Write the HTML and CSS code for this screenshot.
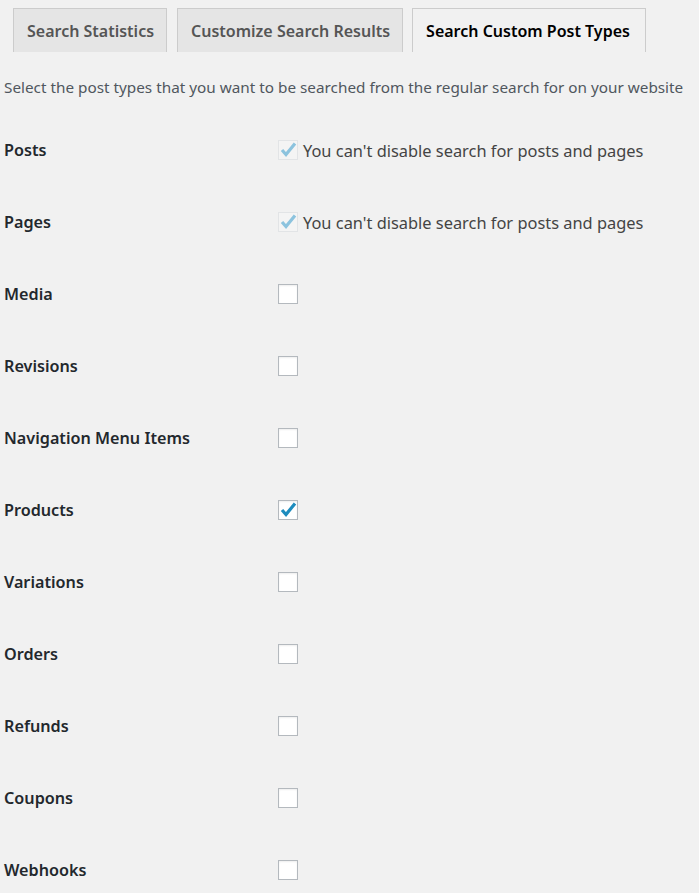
FILE: index.html
```
<!DOCTYPE html>
<html lang="en">
<head>
<meta charset="utf-8">
<title>Search Custom Post Types</title>
<link rel="stylesheet" href="styles.css">
</head>
<body>
<nav class="tabs">
  <a class="tab">Search Statistics</a>
  <a class="tab">Customize Search Results</a>
  <a class="tab active">Search Custom Post Types</a>
</nav>
<p class="desc">Select the post types that you want to be searched from the regular search for on your website</p>
<div class="form">
  <div class="row"><div class="label">Posts</div><div class="field"><span class="cb disabled"><svg viewBox="0 0 18 18"><path d="M3 9 L7 13.5 L16 2.5"/></svg></span><span class="note">You can't disable search for posts and pages</span></div></div>
  <div class="row"><div class="label">Pages</div><div class="field"><span class="cb disabled"><svg viewBox="0 0 18 18"><path d="M3 9 L7 13.5 L16 2.5"/></svg></span><span class="note">You can't disable search for posts and pages</span></div></div>
  <div class="row"><div class="label">Media</div><div class="field"><span class="cb"></span></div></div>
  <div class="row"><div class="label">Revisions</div><div class="field"><span class="cb"></span></div></div>
  <div class="row"><div class="label">Navigation Menu Items</div><div class="field"><span class="cb"></span></div></div>
  <div class="row"><div class="label">Products</div><div class="field"><span class="cb checked"><svg viewBox="0 0 18 18"><path d="M3 9 L7 13.5 L16 2.5"/></svg></span></div></div>
  <div class="row"><div class="label">Variations</div><div class="field"><span class="cb"></span></div></div>
  <div class="row"><div class="label">Orders</div><div class="field"><span class="cb"></span></div></div>
  <div class="row"><div class="label">Refunds</div><div class="field"><span class="cb"></span></div></div>
  <div class="row"><div class="label">Coupons</div><div class="field"><span class="cb"></span></div></div>
  <div class="row"><div class="label">Webhooks</div><div class="field"><span class="cb"></span></div></div>
</div>
</body>
</html>
```
FILE: styles.css
```
html, body {
  margin: 0;
  padding: 0;
  background: #f1f1f1;
}
body {
  font-family: "Noto Sans", "Open Sans", sans-serif;
  color: #23282d;
  overflow: hidden;
}
.tabs {
  display: flex;
  gap: 10px;
  padding: 8px 0 0 13px;
  height: 44px;
}
.tab {
  display: flex;
  align-items: center;
  padding: 0 12px 0 13px;
  height: 43px;
  background: #e5e5e5;
  border: 1px solid #ccc;
  border-bottom: none;
  font-size: 16px;
  font-weight: 600;
  color: #555;
}
.tab.active {
  background: #f1f1f1;
  color: #000;
  margin-left: -1px;
  padding-right: 15px;
}
.desc {
  margin: 24px 0 16px 4px;
  font-size: 15.3px;
  line-height: 22px;
  color: #50575e;
  white-space: nowrap;
}
.row {
  display: grid;
  grid-template-columns: 274px 1fr;
  height: 72px;
  align-items: center;
}
.label {
  padding-left: 4px;
  font-size: 16.2px;
  font-weight: 600;
  color: #23282d;
}
.field {
  display: flex;
  align-items: center;
  gap: 5px;
}
.cb {
  box-sizing: border-box;
  width: 20px;
  height: 20px;
  border: 1px solid #b4b9be;
  background: #fff;
  box-shadow: inset 0 1px 2px rgba(0,0,0,.07);
  display: flex;
  margin-left: 4px;
}
.cb svg {
  width: 18px;
  height: 18px;
  overflow: visible;
}
.cb svg path {
  fill: none;
  stroke: #1e8cbe;
  stroke-width: 3.2;
  stroke-linecap: butt;
  stroke-linejoin: miter;
}
.cb.disabled {
  background: #f4f4f4;
  border-color: #e2e4e6;
  box-shadow: none;
}
.cb.disabled svg path {
  stroke: #8cc3de;
}
.note {
  font-size: 16.4px;
  color: #444;
}
```
